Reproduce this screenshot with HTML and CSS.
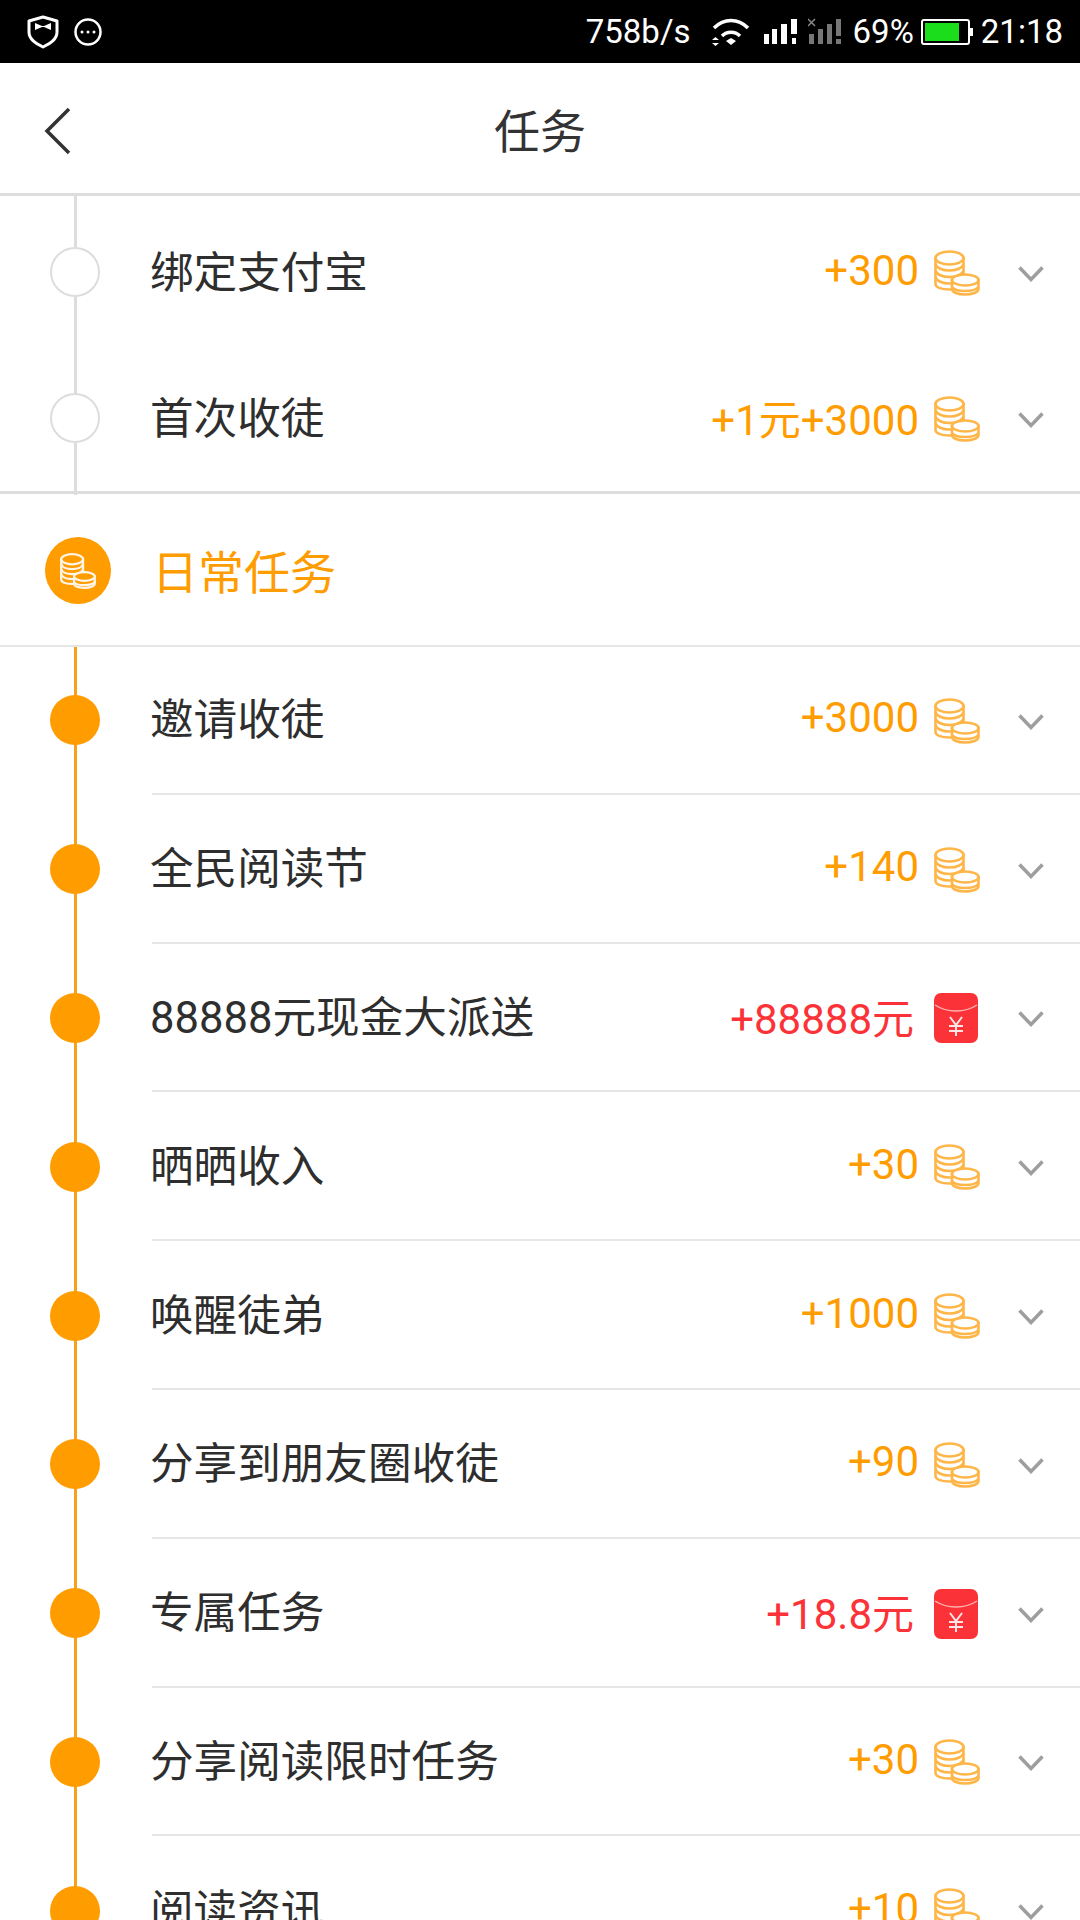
FILE: index.html
```html
<!DOCTYPE html>
<html lang="zh-CN">
<head>
  <meta charset="UTF-8" />
  <meta name="viewport" content="width=device-width, initial-scale=1.0"/>
  <title>任务</title>
  <link rel="stylesheet" href="styles.css">
</head>
<body>
  <!-- shared icons -->
  <svg class="defs" width="0" height="0">
    <symbol id="coins" viewBox="0 0 46 46">
      <path d="M1.5 8v26c0 3 5 5.500 14 5.500s14-2.500 14-5.500V8z"/>
      <ellipse cx="15.500" cy="8" rx="14" ry="6.500"/>
      <path d="M1.500 14c1 4 7 6.500 14 6.500s13-2.500 14-6.500M1.500 20.500c1 4 7 6.500 14 6.500s13-2.500 14-6.500M1.500 27c1 4 7 6.500 14 6.500s13-2.500 14-6.500" fill="none"/>
      <path d="M18 30v9c0 3.500 6 5.500 13 5.500s13.500-2 13.500-5.500v-9z"/>
      <ellipse cx="31.250" cy="30" rx="13.250" ry="5.500"/>
      <path d="M18 37c1.500 2.500 7 4 13 4s11.500-1.500 13.500-4" fill="none"/>
    </symbol>
    <symbol id="packet" viewBox="0 0 44 50">
      <rect width="44" height="50" rx="7" fill="#fb3338"/>
      <path d="M1 12c6 4 13 6 21 6s15-2 21-6" fill="none" stroke="#ffb5b5" stroke-width="1.500"/>
      <path d="M16 24l6 8 6-8M15 33h14M15 38h14M22 32v11" fill="none" stroke="#ffe5e5" stroke-width="2"/>
    </symbol>
    <symbol id="chevron" viewBox="0 0 26 16">
      <path d="M1.500 1.500L13 13.500 24.500 1.500" fill="none" stroke="#9e9e9e" stroke-width="3.500"/>
    </symbol>
  </svg>

  <div class="page">
    <div class="status-bar">
      <div class="status-left">
        <svg class="ic-shield" width="32" height="34" viewBox="0 0 32 34">
          <path d="M16 2l14 4v11c0 7-6 11-14 15C8 28 2 24 2 17V6z" fill="none" stroke="#fff" stroke-width="3" stroke-linejoin="round"/>
          <path d="M8 8l7 3h2l7-3v7l-7-3h-2l-7 3z" fill="#fff"/>
        </svg>
        <svg class="ic-more" width="28" height="28" viewBox="0 0 28 28">
          <circle cx="14" cy="14" r="12.500" fill="none" stroke="#fff" stroke-width="2.500"/>
          <circle cx="8" cy="14" r="1.500" fill="#fff"/>
          <circle cx="14" cy="14" r="1.500" fill="#fff"/>
          <circle cx="20" cy="14" r="1.500" fill="#fff"/>
        </svg>
      </div>
      <div class="status-right">
        <span class="speed">758b/s</span>
        <svg class="ic-wifi" width="40" height="30" viewBox="0 0 40 30">
          <path d="M3 11C13 1 27 1 37 11M11 19c5-5 13-5 18 0" fill="none" stroke="#fff" stroke-width="3.500"/>
          <path d="M15 24l5-3 5 3-5 4z" fill="#fff"/>
          <path d="M1 23h7l-3.500-3zM1 26h7l-3.500 3z" fill="#fff"/>
        </svg>
        <svg class="ic-signal" width="33" height="30" viewBox="0 0 33 30">
          <rect x="0" y="17" width="5" height="10" fill="#fff"/>
          <rect x="8" y="12" width="5" height="15" fill="#fff"/>
          <rect x="17" y="7" width="6" height="20" fill="#fff"/>
          <rect x="27" y="2" width="6" height="15" fill="#fff"/>
          <rect x="28" y="21" width="4" height="6" fill="#fff"/>
        </svg>
        <svg class="ic-signal-off" width="34" height="30" viewBox="0 0 34 30">
          <path d="M0 2l7 7M7 2L0 9" stroke="#888" stroke-width="1.500"/>
          <rect x="1" y="17" width="5" height="10" fill="#777"/>
          <rect x="10" y="12" width="5" height="15" fill="#777"/>
          <rect x="19" y="7" width="5" height="20" fill="#777"/>
          <rect x="28" y="2" width="5" height="17" fill="#777"/>
          <rect x="28" y="22" width="5" height="5" fill="#777"/>
        </svg>
        <span class="battery-pct">69%</span>
        <svg class="ic-battery" width="52" height="28" viewBox="0 0 52 28">
          <rect x="1" y="2" width="47" height="24" rx="2" fill="none" stroke="#fff" stroke-width="2"/>
          <rect x="4" y="5" width="34" height="18" fill="#1bdd1b"/>
          <rect x="49" y="10" width="3" height="8" fill="#fff"/>
        </svg>
        <span class="clock">21:18</span>
      </div>
    </div>

    <div class="nav-bar">
      <svg class="back" width="28" height="48" viewBox="0 0 28 48">
        <path d="M25 2L3 24l22 22" fill="none" stroke="#333" stroke-width="3.500"/>
      </svg>
      <h1>任务</h1>
    </div>

    <div class="timeline timeline-grey">
      <div class="task task-plain">
        <span class="dot"></span>
        <div class="task-body">
          <span class="task-name">绑定支付宝</span>
          <span class="reward">+300</span>
          <svg class="coin"><use href="#coins"/></svg>
          <svg class="chevron"><use href="#chevron"/></svg>
        </div>
      </div>
      <div class="task task-plain">
        <span class="dot"></span>
        <div class="task-body">
          <span class="task-name">首次收徒</span>
          <span class="reward">+1元+3000</span>
          <svg class="coin"><use href="#coins"/></svg>
          <svg class="chevron"><use href="#chevron"/></svg>
        </div>
      </div>
    </div>

    <div class="section-head">
      <span class="section-icon"><svg class="coin-head"><use href="#coins"/></svg></span>
      <h2>日常任务</h2>
    </div>

    <div class="timeline timeline-orange">
      <div class="task">
        <span class="dot"></span>
        <div class="task-body">
          <span class="task-name">邀请收徒</span>
          <span class="reward">+3000</span>
          <svg class="coin"><use href="#coins"/></svg>
          <svg class="chevron"><use href="#chevron"/></svg>
        </div>
      </div>
      <div class="task">
        <span class="dot"></span>
        <div class="task-body">
          <span class="task-name">全民阅读节</span>
          <span class="reward">+140</span>
          <svg class="coin"><use href="#coins"/></svg>
          <svg class="chevron"><use href="#chevron"/></svg>
        </div>
      </div>
      <div class="task">
        <span class="dot"></span>
        <div class="task-body">
          <span class="task-name">88888元现金大派送</span>
          <span class="reward reward-red">+88888元</span>
          <svg class="packet"><use href="#packet"/></svg>
          <svg class="chevron"><use href="#chevron"/></svg>
        </div>
      </div>
      <div class="task">
        <span class="dot"></span>
        <div class="task-body">
          <span class="task-name">晒晒收入</span>
          <span class="reward">+30</span>
          <svg class="coin"><use href="#coins"/></svg>
          <svg class="chevron"><use href="#chevron"/></svg>
        </div>
      </div>
      <div class="task">
        <span class="dot"></span>
        <div class="task-body">
          <span class="task-name">唤醒徒弟</span>
          <span class="reward">+1000</span>
          <svg class="coin"><use href="#coins"/></svg>
          <svg class="chevron"><use href="#chevron"/></svg>
        </div>
      </div>
      <div class="task">
        <span class="dot"></span>
        <div class="task-body">
          <span class="task-name">分享到朋友圈收徒</span>
          <span class="reward">+90</span>
          <svg class="coin"><use href="#coins"/></svg>
          <svg class="chevron"><use href="#chevron"/></svg>
        </div>
      </div>
      <div class="task">
        <span class="dot"></span>
        <div class="task-body">
          <span class="task-name">专属任务</span>
          <span class="reward reward-red">+18.8元</span>
          <svg class="packet"><use href="#packet"/></svg>
          <svg class="chevron"><use href="#chevron"/></svg>
        </div>
      </div>
      <div class="task">
        <span class="dot"></span>
        <div class="task-body">
          <span class="task-name">分享阅读限时任务</span>
          <span class="reward">+30</span>
          <svg class="coin"><use href="#coins"/></svg>
          <svg class="chevron"><use href="#chevron"/></svg>
        </div>
      </div>
      <div class="task">
        <span class="dot"></span>
        <div class="task-body">
          <span class="task-name">阅读资讯</span>
          <span class="reward">+10</span>
          <svg class="coin"><use href="#coins"/></svg>
          <svg class="chevron"><use href="#chevron"/></svg>
        </div>
      </div>
    </div>
  </div>
</body>
</html>
```

FILE: styles.css
```css
* {
  box-sizing: border-box;
}
body {
  margin: 0;
  font-family: Roboto, "Noto Sans CJK SC", sans-serif;
  background-color: #fff;
}
.defs {
  position: absolute;
}
.page {
  width: 1080px;
  height: 1920px;
  overflow: hidden;
}

.status-bar {
  display: flex;
  justify-content: space-between;
  align-items: center;
  height: 63px;
  padding: 0 17px 0 27px;
  background: #000;
  color: #fff;
  font-size: 33px;
}
.status-left,
.status-right {
  display: flex;
  align-items: center;
}
.ic-more {
  margin-left: 15px;
}
.ic-wifi {
  margin-left: 20px;
}
.ic-signal {
  margin-left: 13px;
}
.ic-signal-off {
  margin-left: 11px;
}
.battery-pct {
  margin-left: 11px;
}
.ic-battery {
  margin-left: 7px;
}
.clock {
  margin-left: 8px;
}

.nav-bar {
  display: flex;
  align-items: center;
  justify-content: center;
  position: relative;
  height: 133px;
  border-bottom: 3px solid #ddd;
}
.nav-bar h1 {
  margin: 0;
  font-size: 46px;
  font-weight: 400;
  color: #333;
}
.back {
  position: absolute;
  left: 44px;
  top: 44px;
}

.timeline {
  position: relative;
}
.timeline::before {
  content: "";
  position: absolute;
  left: 74px;
  top: 0;
  bottom: 0;
  width: 3px;
}
.timeline-grey::before {
  background: #ddd;
  bottom: -4px;
}
.timeline-orange::before {
  background: #f9a01b;
  top: 1px;
}

.timeline-grey {
  padding-top: 1px;
  border-bottom: 3px solid #ddd;
}
.timeline-orange {
  margin-top: -1px;
}

.task {
  display: flex;
  align-items: center;
  height: 148.800px;
  padding-left: 50px;
}
.task-plain {
  height: 147px;
}
.task-plain:first-child {
  margin-top: 1px;
}
.task-plain:last-child {
  height: 145.500px;
}
.dot {
  position: relative;
  flex: none;
  width: 50px;
  height: 50px;
  border-radius: 50%;
  background: #ff9c00;
}
.timeline-grey .dot {
  background: #fff;
  border: 2px solid #ddd;
}
.task-body {
  display: flex;
  align-items: center;
  flex: 1;
  height: 100%;
  margin-left: 52px;
  padding-right: 36px;
  border-bottom: 2px solid #e6e6e6;
}
.task-plain .task-body {
  border-bottom: none;
}
.task-name {
  flex: 1;
  margin-left: -2px;
  margin-bottom: 6px;
  font-size: 43.600px;
  color: #2e2e2e;
}
.reward {
  margin-bottom: 3px;
  font-size: 42px;
  color: #ff9c00;
}
.reward-red {
  color: #fb3338;
}
.coin {
  width: 46px;
  height: 46px;
  margin-top: 3px;
  margin-left: 15px;
  fill: #fff;
  stroke: #ffb648;
  stroke-width: 2.600;
}
.packet {
  width: 44px;
  height: 50px;
  margin-top: 3px;
  margin-left: 20px;
  margin-right: 2px;
}
.chevron {
  width: 26px;
  height: 16px;
  margin-top: 5px;
  margin-left: 38px;
}

.section-head {
  display: flex;
  align-items: center;
  height: 153.500px;
  padding-top: 3px;
  padding-left: 45px;
  border-bottom: 2px solid #e6e6e6;
}
.section-icon {
  display: flex;
  align-items: center;
  justify-content: center;
  width: 66px;
  height: 67px;
  border-radius: 50%;
  background: #ff9c00;
}
.coin-head {
  width: 36px;
  height: 38px;
  fill: #ff9c00;
  stroke: #fff5e6;
  stroke-width: 2.800;
}
.section-head h2 {
  margin: 0 0 4px 41px;
  font-size: 46px;
  font-weight: 400;
  color: #ff9c00;
}
```
